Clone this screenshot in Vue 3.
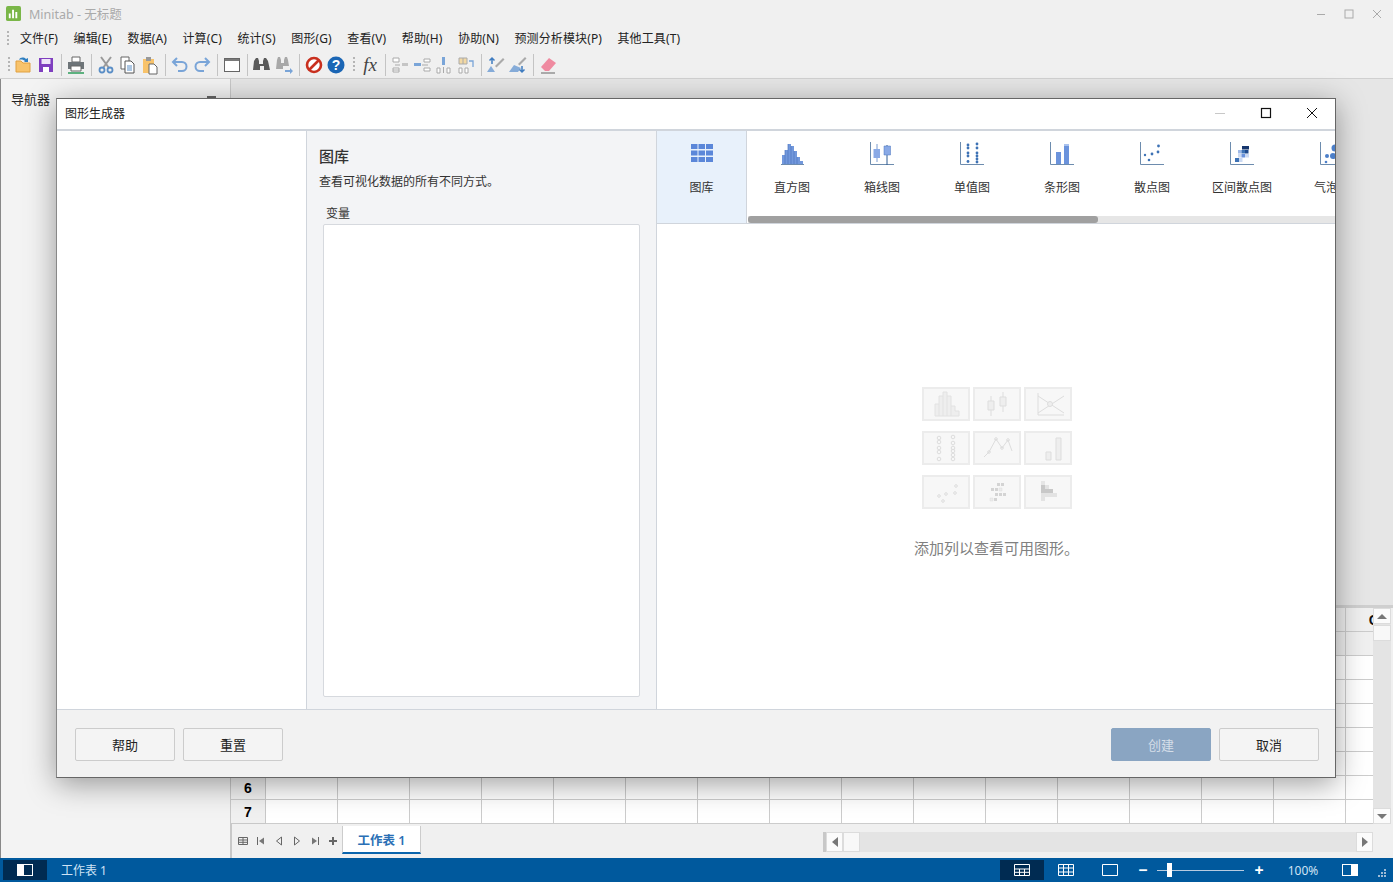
<template>
  <div class="app">
    <div class="titlebar">
      <svg class="logo" viewBox="0 0 16 16">
        <rect width="16" height="16" rx="2" fill="#7ab648" />
        <path d="M3 8h2v5H3zM6.500 4h2v9h-2zM10 6.500h2V13h-2z" fill="#fff" />
      </svg>
      <span class="app-title">Minitab - 无标题</span>
      <div class="win-btns">
        <svg viewBox="0 0 10 10"><path d="M1 5.500h8" stroke="#aaa" /></svg>
        <svg viewBox="0 0 10 10"><rect x="1" y="1" width="8" height="8" fill="none" stroke="#aaa" /></svg>
        <svg viewBox="0 0 10 10"><path d="M1 1l8 8M9 1l-8 8" stroke="#aaa" /></svg>
      </div>
    </div>

    <div class="menubar">
      <span class="grip"></span>
      <span v-for="m in menus" :key="m" class="menu-item">{{ m }}</span>
    </div>

    <div class="toolbar">
      <span class="grip"></span>
      <div class="tb-icon"><svg viewBox="0 0 20 20"><path d="M2 17V6h5l2 2h7v9z" fill="#f8c36b" stroke="#e0a040" /><path d="M5 5c1-3 5-3 7-1l2-1v4h-4l1-1c-1-1-4-2-6-1z" fill="#2f7fc1" /></svg></div>
      <div class="tb-icon"><svg viewBox="0 0 20 20"><path d="M3 3h14v14H3z" fill="#7f3fbf" /><path d="M5.500 4h9v5h-9z" fill="#efe6f8" /><path d="M7 12h6v5H7z" fill="#fff" /></svg></div>
      <span class="sep"></span>
      <div class="tb-icon"><svg viewBox="0 0 20 20"><path d="M6 2h8v5H6z" fill="#fff" stroke="#666" /><path d="M2 7h16v7H2z" fill="#6d7478" /><path d="M5 11h10v5H5z" fill="#fff" stroke="#666" /><path d="M2 18h16" stroke="#2e9e5b" stroke-width="1.500" /></svg></div>
      <span class="sep"></span>
      <div class="tb-icon"><svg viewBox="0 0 20 20"><path d="M5 2l8 11M15 2L7 13" stroke="#9a9a9a" stroke-width="2" /><circle cx="6" cy="15" r="2.500" fill="none" stroke="#5b8fc7" stroke-width="1.800" /><circle cx="14" cy="15" r="2.500" fill="none" stroke="#5b8fc7" stroke-width="1.800" /></svg></div>
      <div class="tb-icon"><svg viewBox="0 0 20 20"><path d="M3 2h8v12H3z" fill="#fff" stroke="#666" /><path d="M7 6h6l3 3v9H7z" fill="#fff" stroke="#555" /><path d="M9 11h5M9 13h5M9 15h5" stroke="#5b8fc7" /></svg></div>
      <div class="tb-icon"><svg viewBox="0 0 20 20"><path d="M3 4h11v14H3z" fill="#f8c36b" /><path d="M6 2h5v4H6z" fill="#999" /><path d="M9 9h5l3 3v7H9z" fill="#fff" stroke="#666" /></svg></div>
      <span class="sep"></span>
      <div class="tb-icon"><svg viewBox="0 0 20 20"><path d="M7 3L3 7l4 4" fill="none" stroke="#7aa5d8" stroke-width="2" /><path d="M3 7h9a4.500 4.500 0 0 1 0 9H8" fill="none" stroke="#7aa5d8" stroke-width="2" /></svg></div>
      <div class="tb-icon"><svg viewBox="0 0 20 20"><path d="M13 3l4 4-4 4" fill="none" stroke="#7aa5d8" stroke-width="2" /><path d="M17 7H8a4.500 4.500 0 0 0 0 9h4" fill="none" stroke="#7aa5d8" stroke-width="2" /></svg></div>
      <span class="sep"></span>
      <div class="tb-icon"><svg viewBox="0 0 20 20"><rect x="2.500" y="3.500" width="15" height="13" fill="#fff" stroke="#666" /><path d="M3 4h14v2H3z" fill="#7a7a7a" /></svg></div>
      <span class="sep"></span>
      <div class="tb-icon binoc"><svg viewBox="0 0 20 20"><path d="M3 6l2-3h2l1 3v3h4V6l1-3h2l2 3 2 9h-6v-4H9v4H2z" fill="#5a5a5a" /></svg></div>
      <div class="tb-icon"><svg viewBox="0 0 20 20"><path d="M3 5l1-3h2l1 3v3h3V5l1-3h2l1 3 1 6H9v3H2z" fill="#a8a8a8" /><path d="M11 15h5v-2l3 3-3 3v-2h-5z" fill="#7aa5d8" /></svg></div>
      <span class="sep"></span>
      <div class="tb-icon"><svg viewBox="0 0 20 20"><circle cx="10" cy="10" r="7" fill="#fff" stroke="#c9301f" stroke-width="2.600" /><path d="M5 15L15 5" stroke="#c9301f" stroke-width="2.600" /></svg></div>
      <div class="tb-icon"><svg viewBox="0 0 20 20"><circle cx="10" cy="10" r="8.500" fill="#1b66b5" /><text x="10" y="14.500" class="help-mark">?</text></svg></div>
      <span class="grip fx-grip"></span>
      <div class="tb-icon fx">fx</div>
      <span class="sep"></span>
      <div class="tb-icon"><svg viewBox="0 0 20 20"><path d="M3 3h6v4H3zM3 13h6v4H3z" fill="#fff" stroke="#aaa" /><path d="M3 15h6" stroke="#aaa" /><path d="M12 8h6v3h-6z" fill="#c5c5c5" /><path d="M5 10h5" stroke="#aaa" /></svg></div>
      <div class="tb-icon"><svg viewBox="0 0 20 20"><path d="M2 8h7v3H2z" fill="#7aa5d8" /><path d="M12 4h6v3h-6zM12 13h6v3h-6z" fill="#fff" stroke="#aaa" /><path d="M10 10h6" stroke="#aaa" /></svg></div>
      <div class="tb-icon"><svg viewBox="0 0 20 20"><path d="M8 2h3v8H8z" fill="#7aa5d8" /><path d="M3 13h3v5H3zM13 13h3v5h-3z" fill="#fff" stroke="#aaa" /><path d="M9.500 12v6" stroke="#aaa" /></svg></div>
      <div class="tb-icon"><svg viewBox="0 0 20 20"><path d="M3 3h8v6H3z" fill="#f3d9a4" stroke="#aaa" /><path d="M7 3v6" stroke="#aaa" /><path d="M3 13h3v5H3zM9 13h3v5H9z" fill="#fff" stroke="#aaa" /><path d="M13 6h4v6" fill="none" stroke="#7aa5d8" stroke-width="1.300" /></svg></div>
      <span class="sep"></span>
      <div class="tb-icon"><svg viewBox="0 0 20 20"><path d="M9 11l8-8 1.500 1.500-8 8z" fill="#aaa" /><path d="M1 17l4-6 4 6z" fill="#86acd9" /><path d="M6 9V3M3.500 5.500L6 3l2.500 2.500" fill="none" stroke="#3f7cc0" stroke-width="1.500" /></svg></div>
      <div class="tb-icon"><svg viewBox="0 0 20 20"><path d="M10 9l7-7 1.500 1.500-7 7z" fill="#aaa" /><path d="M1 17l5-7 7 3-3 4z" fill="#86acd9" /><path d="M14 11v6M11.500 14.500L14 17l2.500-2.500" fill="none" stroke="#3f7cc0" stroke-width="1.500" /></svg></div>
      <span class="sep"></span>
      <div class="tb-icon"><svg viewBox="0 0 20 20"><path d="M3 12l8-9 7 5-7 8H7z" fill="#ef8aa0" /><path d="M3 18h14" stroke="#666" /></svg></div>
    </div>

    <div class="workspace">
      <aside class="nav">
        <div class="nav-head">
          <span>导航器</span>
          <span class="nav-pin"></span>
        </div>
      </aside>

      <main class="main">
        <div class="empty-area"></div>
        <div class="sheet-row">
          <div class="sheet">
            <div class="cell-row head">
              <div class="row-no"></div>
              <div v-for="c in cols" :key="c" class="cell col-name">{{ c === 16 ? 'C16' : '' }}</div>
            </div>
            <div class="cell-row head">
              <div class="row-no"></div>
              <div v-for="c in cols" :key="c" class="cell"></div>
            </div>
            <div v-for="r in 7" :key="r" class="cell-row">
              <div class="row-no">{{ r > 5 ? r : '' }}</div>
              <div v-for="c in cols" :key="c" class="cell"></div>
            </div>
          </div>
          <div class="vscroll">
            <div class="sb-btn"><span class="tri up"></span></div>
            <div class="sb-thumb"></div>
            <div class="sb-fill"></div>
            <div class="sb-btn"><span class="tri down"></span></div>
          </div>
        </div>
        <div class="tabs">
          <div class="tab-tools">
            <svg viewBox="0 0 12 12"><path d="M1.500 2.500h9v7h-9zM1.500 5h9M1.500 7.300h9M6 2.500v7" fill="none" stroke="#666" /></svg>
            <svg viewBox="0 0 12 12"><path d="M2.500 2v8" stroke="#666" /><path d="M9 2.500v7L4 6z" fill="#777" /></svg>
            <svg viewBox="0 0 12 12"><path d="M8.500 2v8L3.500 6z" fill="none" stroke="#666" /></svg>
            <svg viewBox="0 0 12 12"><path d="M3.500 2v8l5-4z" fill="none" stroke="#666" /></svg>
            <svg viewBox="0 0 12 12"><path d="M9.500 2v8" stroke="#666" /><path d="M3 2.500v7L8 6z" fill="#777" /></svg>
            <svg viewBox="0 0 12 12"><path d="M6 2v8M2 6h8" stroke="#666" stroke-width="2" /></svg>
          </div>
          <div class="sheet-tab">工作表 1</div>
          <div class="hscroll">
            <div class="hs-btn"><span class="tri left"></span></div>
            <div class="hs-thumb"></div>
            <div class="hs-fill"></div>
            <div class="hs-btn"><span class="tri right"></span></div>
          </div>
        </div>
      </main>
    </div>

    <footer class="status">
      <div class="st-block">
        <svg viewBox="0 0 16 12" class="st-panel"><rect x=".5" y=".5" width="15" height="11" fill="none" stroke="#fff" /><path d="M0 0h7v12H0z" fill="#fff" /></svg>
      </div>
      <span class="st-name">工作表 1</span>
      <div class="st-right">
        <div class="st-view active">
          <svg viewBox="0 0 16 12"><path d="M.5.500h15v11H.5zM.5 5h15M.5 8.300h15M5.500 5v6.500M10.500 5v6.500" fill="none" stroke="#fff" /></svg>
        </div>
        <div class="st-view">
          <svg viewBox="0 0 16 12"><path d="M.5.500h15v11H.5zM.5 4h15M.5 8h15M5.500.5v11M10.500.5v11" fill="none" stroke="#fff" /></svg>
        </div>
        <div class="st-view">
          <svg viewBox="0 0 16 12"><path d="M.5.500h15v11H.5z" fill="none" stroke="#fff" /></svg>
        </div>
        <span class="zoom-sign minus">−</span>
        <div class="zoom-track"><span class="zoom-thumb"></span></div>
        <span class="zoom-sign">+</span>
        <span class="zoom-val">100%</span>
        <svg viewBox="0 0 16 12" class="st-panel right-panel"><rect x=".5" y=".5" width="15" height="11" fill="none" stroke="#fff" /><path d="M9 0h7v12H9z" fill="#fff" /></svg>
        <svg viewBox="0 0 8 8" class="st-grip"><path d="M6 0h2v2H6zM3 3h2v2H3zM6 3h2v2H6zM0 6h2v2H0zM3 6h2v2H3zM6 6h2v2H6z" fill="#9dbbd6" /></svg>
      </div>
    </footer>

    <section class="dialog">
      <header class="dlg-title">
        <span>图形生成器</span>
        <div class="dlg-btns">
          <svg viewBox="0 0 12 12"><path d="M1 6.500h10" stroke="#c8c8c8" /></svg>
          <svg viewBox="0 0 12 12"><rect x="1.500" y="1.500" width="9" height="9" fill="none" stroke="#111" stroke-width="1.200" /></svg>
          <svg viewBox="0 0 12 12"><path d="M1 1l10 10M11 1L1 11" stroke="#111" /></svg>
        </div>
      </header>

      <div class="dlg-body">
        <div class="pane-left"></div>
        <div class="pane-mid">
          <h2>图库</h2>
          <p>查看可视化数据的所有不同方式。</p>
          <label>变量</label>
          <div class="var-box"></div>
        </div>
        <div class="pane-right">
          <div class="strip">
            <div class="strip-tabs">
              <div class="g-tab selected">
                <svg viewBox="0 0 24 24"><path d="M1 2h6.500v5H1zM8.500 2H15v5H8.500zM16 2h7v5h-7zM1 8.500h6.500v5H1zM8.500 8.500H15v5H8.500zM16 8.500h7v5h-7zM1 15h6.500v5H1zM8.500 15H15v5H8.500zM16 15h7v5h-7z" fill="#5b87d9" /></svg>
                <span>图库</span>
              </div>
              <div class="g-tab">
                <svg viewBox="0 0 24 24"><path d="M1 22.500h23" stroke="#6d8cae" /><path d="M2 13h3v9H2zM5 8h3v14H5zM8 2h3v20H8zM11 4h3v18h-3zM14 9h3v13h-3zM17 15h3v7h-3zM20 19h3v3h-3z" fill="#7298dc" /><path d="M5 8v14M8 2v20M11 4v18M14 9v13M17 15v7" stroke="#4b74bf" stroke-width=".7" /></svg>
                <span>直方图</span>
              </div>
              <div class="g-tab">
                <svg viewBox="0 0 24 24"><path d="M.5 0v22.500H24" fill="none" stroke="#6d8cae" /><path d="M7 2v18" stroke="#7a9bd0" /><path d="M3.500 7h6.500v9H3.500z" fill="#89a9e6" /><path d="M17 3v20" stroke="#2c5a92" /><path d="M14 4h6.500v9H14z" fill="#89a9e6" stroke="#4b74bf" stroke-width=".5" /></svg>
                <span>箱线图</span>
              </div>
              <div class="g-tab">
                <svg viewBox="0 0 24 24"><path d="M.5 0v22.500H24" fill="none" stroke="#6d8cae" /><g fill="#3d72b5"><circle cx="8" cy="3" r="1.400" /><circle cx="8" cy="6" r="1.400" /><circle cx="8" cy="11" r="1.400" /><circle cx="8" cy="14" r="1.400" /><circle cx="8" cy="19.500" r="1.400" /><circle cx="17" cy="2" r="1.400" /><circle cx="17" cy="6" r="1.400" /><circle cx="17" cy="11" r="1.400" /><circle cx="17" cy="14" r="1.400" /><circle cx="17" cy="17" r="1.400" /><circle cx="17" cy="20" r="1.400" /></g></svg>
                <span>单值图</span>
              </div>
              <div class="g-tab">
                <svg viewBox="0 0 24 24"><path d="M.5 0v22.500H24" fill="none" stroke="#6d8cae" /><path d="M6 10h5v12H6z" fill="#6b93dc" /><path d="M14 2h5v20h-5z" fill="#6b93dc" /><path d="M14 2h5v2h-5z" fill="#a9c2ee" /></svg>
                <span>条形图</span>
              </div>
              <div class="g-tab">
                <svg viewBox="0 0 24 24"><path d="M.5 0v22.500H24" fill="none" stroke="#6d8cae" /><g fill="#3d72b5"><circle cx="5" cy="13" r="1.200" /><circle cx="9" cy="18" r="1.300" /><circle cx="12" cy="12" r="1.400" /><circle cx="18" cy="10" r="1.400" /><circle cx="18.500" cy="4" r="1.400" /></g></svg>
                <span>散点图</span>
              </div>
              <div class="g-tab">
                <svg viewBox="0 0 24 24"><path d="M.5 0v22.500H24" fill="none" stroke="#6d8cae" /><path d="M12 4h3.500v3.500H12zM15.500 4H19v3.500h-3.500z" fill="#17376e" /><path d="M8 8h3.500v3.500H8z" fill="#9db8e8" /><path d="M11.500 8H15v3.500h-3.500z" fill="#3d72b5" /><path d="M15 8h3.500v3.500H15z" fill="#1f4a8d" /><path d="M8 12h3.500v3.500H8zM15 12h4v3.500h-4z" fill="#cbd9f2" /><path d="M11.500 12H15v3.500h-3.500z" fill="#6b93dc" /><path d="M5 16h4v4H5z" fill="#3d72b5" /><path d="M9 16h3.500v4H9z" fill="#cbd9f2" /></svg>
                <span>区间散点图</span>
              </div>
              <div class="g-tab">
                <svg viewBox="0 0 24 24"><path d="M.5 0v22.500H24" fill="none" stroke="#6d8cae" /><g fill="#4c7fc9"><circle cx="7" cy="14" r="2" /><circle cx="6" cy="20" r="1.300" /><circle cx="13" cy="14" r="3" /><circle cx="15" cy="6" r="3.500" /></g></svg>
                <span>气泡图</span>
              </div>
            </div>
            <div class="strip-scroll"><span class="strip-thumb"></span></div>
          </div>

          <div class="empty-state">
            <div class="tiles">
              <div class="tile"><svg viewBox="0 0 42 28"><path d="M10 26V14h4V6h4V2h4v4h4v10h4v5h4v5zM14 14v12M18 6v20M22 6v20M26 16v10" fill="#eee" stroke="#e2e2e2" /></svg></div>
              <div class="tile"><svg viewBox="0 0 42 28"><path d="M15 6v20M27 2v20" stroke="#ddd" /><path d="M12 11h6v9h-6zM24 7h6v9h-6z" fill="#eee" stroke="#ddd" /></svg></div>
              <div class="tile"><svg viewBox="0 0 42 28"><path d="M11 3v22h26M11 6l26 17M11 23L37 6" fill="none" stroke="#ddd" /><circle cx="23" cy="14" r="2.500" fill="#eee" stroke="#ddd" /></svg></div>
              <div class="tile"><svg viewBox="0 0 42 28" fill="none" stroke="#ddd"><circle cx="14" cy="4" r="1.800" /><circle cx="14" cy="8" r="1.800" /><circle cx="14" cy="14" r="1.800" /><circle cx="14" cy="18" r="1.800" /><circle cx="14" cy="25" r="1.800" /><circle cx="28" cy="3" r="1.800" /><circle cx="28" cy="9" r="1.800" /><circle cx="28" cy="14" r="1.800" /><circle cx="28" cy="17" r="1.800" /><circle cx="28" cy="21" r="1.800" /><circle cx="28" cy="25" r="1.800" /></svg></div>
              <div class="tile"><svg viewBox="0 0 42 28" fill="none" stroke="#ddd"><path d="M8 23l5-5 7-13 6 9 6-8 4 11" /><circle cx="13" cy="18" r="1.300" /><circle cx="20" cy="5" r="1.300" /><circle cx="26" cy="14" r="1.300" /><circle cx="32" cy="6" r="1.300" /></svg></div>
              <div class="tile"><svg viewBox="0 0 42 28"><path d="M19 18h5v8h-5zM29 4h5v22h-5z" fill="#eee" stroke="#ddd" /></svg></div>
              <div class="tile"><svg viewBox="0 0 42 28" fill="none" stroke="#ddd"><circle cx="14" cy="18" r="1.300" /><circle cx="21" cy="16" r="1.300" /><circle cx="30" cy="15" r="1.300" /><circle cx="31" cy="8" r="1.300" /><circle cx="18" cy="23" r="1.300" /></svg></div>
              <div class="tile"><svg viewBox="0 0 42 28"><path d="M21 5h3v3h-3zM25 5h3v3h-3zM15 10h3v3h-3zM19 10h3v3h-3zM23 15h3v3h-3zM27 15h3v3h-3zM19 15h3v3h-3zM18 20h3v3h-3z" fill="#d4d4d4" /><path d="M14 20h3v3h-3zM23 10h3v3h-3z" fill="#ececec" stroke="#ddd" stroke-width=".5" /></svg></div>
              <div class="tile"><svg viewBox="0 0 42 28"><path d="M14 3h4v4h-4z" fill="#e6e6e6" /><path d="M14 7h4v4h-4zM14 11h4v4h-4zM18 11h4v4h-4zM22 11h4v4h-4z" fill="#c8c8c8" /><path d="M18 7h4v4h-4zM14 15h4v4h-4zM18 15h4v4h-4zM22 15h4v4h-4zM26 15h4v4h-4zM14 19h4v4h-4z" fill="#e3e3e3" /></svg></div>
            </div>
            <p class="empty-text">添加列以查看可用图形。</p>
          </div>
        </div>
      </div>

      <footer class="dlg-foot">
        <button class="btn">帮助</button>
        <button class="btn">重置</button>
        <span class="foot-gap"></span>
        <button class="btn primary" disabled>创建</button>
        <button class="btn">取消</button>
      </footer>
    </section>
  </div>
</template>

<script setup>
const menus = ['文件(F)', '编辑(E)', '数据(A)', '计算(C)', '统计(S)', '图形(G)', '查看(V)', '帮助(H)', '协助(N)', '预测分析模块(P)', '其他工具(T)']
const cols = Array.from({ length: 16 }, (_, i) => i + 1)
</script>

<style>
html, body {
  margin: 0;
  overflow: hidden;
}
</style>

<style scoped>
.app {
  position: relative;
  width: 1393px;
  height: 882px;
  display: flex;
  flex-direction: column;
  background: #f0f0f0;
  font-family: "Noto Sans", "Noto Sans CJK SC", sans-serif;
  font-size: 12px;
  color: #222;
  overflow: hidden;
}

.titlebar {
  height: 27px;
  display: flex;
  align-items: center;
  padding-left: 6px;
  flex: none;
}

.logo {
  width: 15px;
  height: 15px;
}

.app-title {
  margin-left: 8px;
  color: #aaa;
  font-size: 12.500px;
}

.win-btns {
  margin-left: auto;
  display: flex;
  gap: 18px;
  padding-right: 11px;
}

.win-btns svg {
  width: 10px;
  height: 10px;
}

.menubar {
  height: 24px;
  display: flex;
  align-items: center;
  padding-left: 7px;
  gap: 15.500px;
  flex: none;
}

.menubar .grip {
  margin-right: -4.500px;
}

.menu-item {
  line-height: 24px;
  white-space: nowrap;
  color: #222;
  letter-spacing: 0.12px;
}

.grip {
  width: 2px;
  height: 16px;
  background: repeating-linear-gradient(to bottom, #b5b5b5 0 2px, transparent 2px 4px);
  flex: none;
}

.toolbar {
  height: 28px;
  display: flex;
  align-items: center;
  padding-left: 8px;
  border-bottom: 1px solid #d0d0d0;
  box-sizing: border-box;
  flex: none;
}

.toolbar > .grip {
  margin-right: 3px;
}

.toolbar > .fx-grip {
  margin: 0 4px 0 6px;
}

.tb-icon {
  width: 22px;
  height: 22px;
  display: flex;
  align-items: center;
  justify-content: center;
  flex: none;
}

.tb-icon svg {
  width: 20px;
  height: 20px;
}

.tb-icon.binoc {
  margin-left: -1px;
  margin-right: 1px;
}

.help-mark {
  font-size: 14px;
  font-weight: 700;
  fill: #fff;
  text-anchor: middle;
  font-family: "Liberation Sans", sans-serif;
}

.fx {
  font-family: "Liberation Serif", serif;
  font-style: italic;
  font-size: 19px;
  color: #444;
}

.sep {
  width: 1px;
  height: 22px;
  background: #c4c4c4;
  margin: 0 3px 0 4px;
  flex: none;
}

.workspace {
  flex: 1;
  display: flex;
  min-height: 0;
}

.nav {
  width: 231px;
  flex: none;
  background: #f3f3f3;
  border-right: 1px solid #c8c8c8;
  border-left: 1px solid #888;
  box-sizing: border-box;
}

.nav-head {
  display: flex;
  align-items: center;
  justify-content: space-between;
  padding: 11px 14px 0 10px;
  font-size: 13px;
  line-height: 18px;
}

.nav-pin {
  width: 9px;
  height: 2px;
  background: #666;
  margin-bottom: 4px;
}

.main {
  flex: 1;
  min-width: 0;
  display: flex;
  flex-direction: column;
}

.empty-area {
  flex: 1;
  background: #e6e6e6;
}

.sheet-row {
  display: flex;
  height: 219px;
  flex: none;
  border-top: 3px solid #cfcfcf;
  box-sizing: border-box;
}

.sheet {
  width: 1142px;
  overflow: hidden;
  flex: none;
  background: #fff;
}

.cell-row {
  display: flex;
  height: 24px;
}

.cell-row.head {
  background: #f0f0f0;
}

.row-no {
  width: 35px;
  flex: none;
  background: #f0f0f0;
  border-right: 1px solid #c8c8c8;
  border-bottom: 1px solid #c8c8c8;
  text-align: center;
  font-family: "Liberation Sans", sans-serif;
  font-size: 14px;
  font-weight: 700;
  line-height: 24px;
  color: #000;
  box-sizing: border-box;
}

.cell {
  width: 72px;
  flex: none;
  border-right: 1px solid #ccc;
  border-bottom: 1px solid #ccc;
  box-sizing: border-box;
}

.col-name {
  text-align: center;
  font-family: "Liberation Sans", sans-serif;
  font-size: 14px;
  font-weight: 700;
  line-height: 24px;
  color: #111;
}

.vscroll {
  width: 18px;
  background: #e4e4e4;
  display: flex;
  flex-direction: column;
  flex: none;
}

.sb-btn, .hs-btn {
  height: 16px;
  background: #fbfbfb;
  border: 1px solid #dcdcdc;
  box-sizing: border-box;
  display: flex;
  align-items: center;
  justify-content: center;
  flex: none;
}

.sb-thumb {
  height: 16px;
  margin-top: 1px;
  background: #f8f8f8;
  border: 1px solid #dcdcdc;
  box-sizing: border-box;
}

.sb-fill {
  flex: 1;
}

.tri {
  width: 0;
  height: 0;
  display: block;
}

.tri.up {
  border: 5px solid transparent;
  border-top: 0;
  border-bottom: 5px solid #777;
}

.tri.down {
  border: 5px solid transparent;
  border-bottom: 0;
  border-top: 5px solid #777;
}

.tri.left {
  border: 5px solid transparent;
  border-left: 0;
  border-right: 6px solid #777;
}

.tri.right {
  border: 5px solid transparent;
  border-right: 0;
  border-left: 6px solid #777;
}

.tabs {
  height: 34px;
  flex: none;
  display: flex;
  align-items: flex-start;
  background: #f0f0f0;
  border-left: 1px solid #c8c8c8;
  box-sizing: border-box;
}

.tab-tools {
  width: 110px;
  display: flex;
  align-items: center;
  gap: 6px;
  padding: 11px 0 0 5px;
  box-sizing: border-box;
  flex: none;
}

.tab-tools svg {
  width: 12px;
  height: 12px;
  flex: none;
}

.sheet-tab {
  width: 79px;
  height: 28px;
  margin-top: 2px;
  background: #fff;
  border-right: 1px solid #ccc;
  border-left: 1px solid #ccc;
  border-bottom: 2px solid #0b65ad;
  box-sizing: border-box;
  text-align: center;
  font-size: 12.500px;
  font-weight: 600;
  line-height: 29px;
  color: #2a6fb5;
}

.hscroll {
  margin: 8px 20px 0 402px;
  flex: 1;
  height: 20px;
  display: flex;
  background: #e4e4e4;
  border-left: 3px solid #c8c8c8;
}

.hs-btn {
  width: 17px;
  height: 20px;
}

.hs-thumb {
  width: 17px;
  background: #f8f8f8;
  border: 1px solid #dcdcdc;
  box-sizing: border-box;
}

.hs-fill {
  flex: 1;
}

.status {
  height: 24px;
  background: #00599d;
  display: flex;
  align-items: center;
  color: #cfe3f5;
  flex: none;
}

.st-block {
  width: 44px;
  height: 20px;
  margin-left: 3px;
  background: #002b52;
  display: flex;
  align-items: center;
  justify-content: center;
}

.st-panel {
  width: 16px;
  height: 12px;
}

.st-name {
  margin-left: 14px;
  font-size: 12px;
}

.st-right {
  margin-left: auto;
  display: flex;
  align-items: center;
}

.st-view {
  width: 44px;
  height: 20px;
  display: flex;
  align-items: center;
  justify-content: center;
}

.st-view.active {
  background: #002b52;
}

.st-view svg {
  width: 16px;
  height: 12px;
}

.zoom-sign {
  color: #fff;
  font-size: 16px;
  font-weight: 700;
  width: 10px;
  text-align: center;
  margin-left: 11px;
  line-height: 20px;
}

.zoom-sign.minus {
  margin-left: 6px;
}

.zoom-track {
  position: relative;
  width: 87px;
  height: 1px;
  margin: 0 -1px 0 9px;
  background: #b8cbe0;
}

.zoom-thumb {
  position: absolute;
  left: 10px;
  top: -7px;
  width: 5px;
  height: 14px;
  background: #fff;
}

.zoom-val {
  margin-left: 21px;
  font-size: 12px;
  width: 36px;
  text-align: center;
}

.right-panel {
  margin-left: 21px;
}

.st-grip {
  width: 8px;
  height: 8px;
  margin: 6px 7px 0 20px;
}

.dialog {
  position: absolute;
  left: 56px;
  top: 98px;
  width: 1280px;
  height: 680px;
  box-sizing: border-box;
  display: flex;
  flex-direction: column;
  background: #fff;
  border: 1px solid #666;
  border-left-color: #888;
  box-shadow: 0 6px 28px rgba(0, 0, 0, 0.38);
}

.dlg-title {
  height: 32px;
  display: flex;
  align-items: center;
  padding: 0 8px 2px 8px;
  border-bottom: 2px solid #d0d5dc;
  box-sizing: border-box;
  flex: none;
  font-size: 12px;
  color: #222;
}

.dlg-btns {
  margin-left: auto;
  display: flex;
  gap: 34px;
  padding-right: 9px;
  align-items: center;
}

.dlg-btns svg {
  width: 12px;
  height: 12px;
}

.dlg-body {
  flex: 1;
  display: flex;
  min-height: 0;
}

.pane-left {
  width: 249px;
  flex: none;
  background: #fff;
  border-right: 1px solid #d0d5dc;
}

.pane-mid {
  width: 350px;
  flex: none;
  box-sizing: border-box;
  background: #f3f4f6;
  border-right: 1px solid #d0d5dc;
  padding: 14px 16px 12px 12px;
  display: flex;
  flex-direction: column;
}

.pane-mid h2 {
  margin: 0;
  font-size: 15px;
  font-weight: 500;
  line-height: 22px;
  color: #333;
}

.pane-mid p {
  margin: 6px 0 0;
  font-size: 12px;
  line-height: 18px;
  color: #333;
}

.pane-mid label {
  margin: 14px 0 0 7px;
  font-size: 12px;
  line-height: 18px;
  color: #333;
}

.var-box {
  flex: 1;
  margin: 1px 0 0 4px;
  background: #fff;
  border: 1px solid #d6d9de;
  border-radius: 2px;
}

.pane-right {
  flex: 1;
  min-width: 0;
  display: flex;
  flex-direction: column;
}

.strip {
  height: 93px;
  flex: none;
  position: relative;
  border-bottom: 1px solid #d0d5dc;
  box-sizing: border-box;
  overflow: hidden;
}

.strip-tabs {
  display: flex;
  height: 92px;
}

.g-tab {
  width: 90px;
  flex: none;
  box-sizing: border-box;
  display: flex;
  flex-direction: column;
  align-items: center;
  padding-top: 11px;
  color: #333;
}

.g-tab.selected {
  background: #e8f1fb;
  border-right: 1px solid #d0d5dc;
}

.g-tab svg {
  width: 24px;
  height: 24px;
  flex: none;
}

.g-tab span {
  margin-top: 13px;
  line-height: 18px;
  white-space: nowrap;
}

.strip-scroll {
  position: absolute;
  left: 91px;
  right: 0;
  bottom: 0;
  height: 7px;
  background: #e6e6e6;
}

.strip-thumb {
  display: block;
  width: 350px;
  height: 100%;
  background: #a0a0a0;
  border-radius: 3px;
}

.empty-state {
  flex: 1;
  display: flex;
  flex-direction: column;
  align-items: center;
  padding-top: 163px;
  padding-left: 1px;
  background: #fff;
}

.tiles {
  display: grid;
  grid-template-columns: repeat(3, 48px);
  grid-auto-rows: 34px;
  column-gap: 3px;
  row-gap: 10px;
}

.tile {
  border: 2px solid #ececec;
  background: #f7f7f7;
  display: flex;
  align-items: center;
  justify-content: center;
}

.tile svg {
  width: 42px;
  height: 28px;
}

.empty-text {
  margin: 28px 0 0;
  font-size: 15px;
  line-height: 22px;
  color: #808080;
}

.dlg-foot {
  height: 68px;
  flex: none;
  box-sizing: border-box;
  border-top: 1px solid #d0d5dc;
  background: #f2f2f2;
  display: flex;
  align-items: flex-start;
  padding: 18px 16px 0 18px;
  gap: 8px;
}

.foot-gap {
  flex: 1;
}

.btn {
  width: 100px;
  height: 33px;
  background: #f4f4f4;
  border: 1px solid #ccc;
  border-radius: 2px;
  font-family: inherit;
  font-size: 13px;
  color: #222;
  padding: 0;
}

.btn.primary {
  background: #8aa5c2;
  border-color: #8aa5c2;
  color: #d5dee8;
}
</style>
